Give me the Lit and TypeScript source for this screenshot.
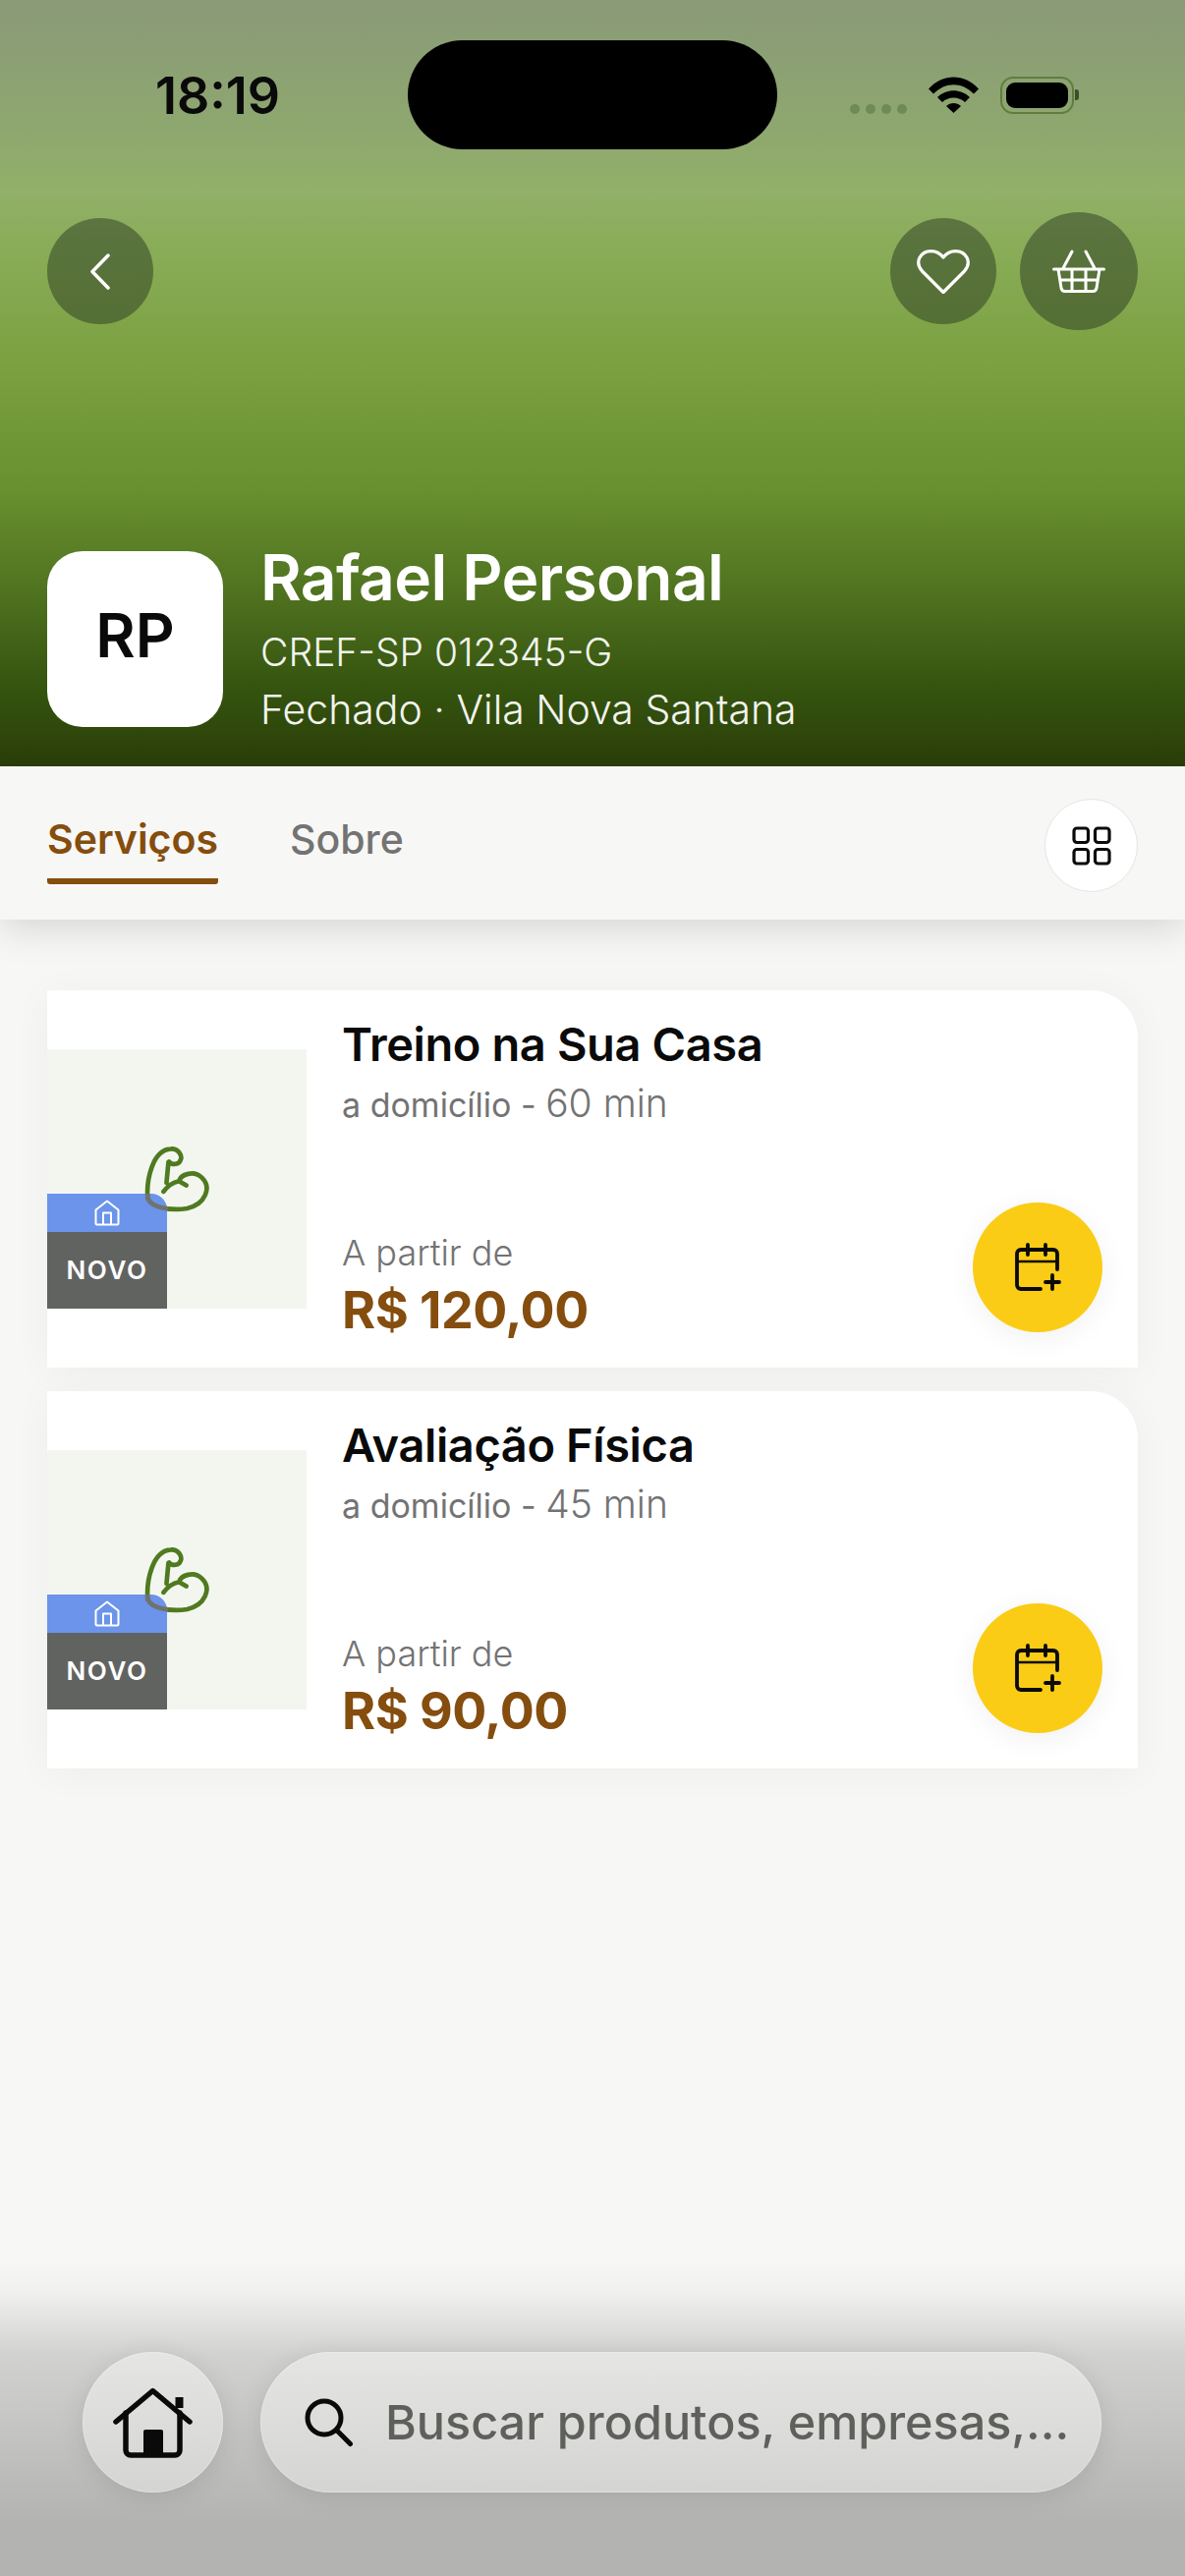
import { LitElement, html, css, svg } from 'lit';
import { customElement } from 'lit/decorators.js';

const services = [
  { title: 'Treino na Sua Casa', duration: '60 min', price: 'R$ 120,00' },
  { title: 'Avaliação Física', duration: '45 min', price: 'R$ 90,00' },
];

const armIcon = svg`<path d="M10 160C5 100 25 10 80 7c25-2 35 23 30 33-5 15-25 18-35 6M73 47l-6 63M58 137c12-17 32-29 47-32l22 13M105 105c5-20 45-35 70-10 30 30 10 80-45 93-30 5-65 2-90-6-20-7-32-17-30-37"/>`;

@customElement('app-root')
export class AppRoot extends LitElement {
  static styles = css`
    :host {
      display: block;
      position: relative;
      width: 1206px;
      height: 2622px;
      overflow: hidden;
      background: #f7f7f5;
      font-family: 'Inter', 'Liberation Sans', sans-serif;
    }

    svg {
      display: block;
    }

    .hero {
      height: 780px;
      box-sizing: border-box;
      padding: 41px 48px 0;
      display: flex;
      flex-direction: column;
      background: linear-gradient(180deg, #8a9a78 0, #8ea76f 130px, #92b068 195px, #8aad5a 245px, #7ba140 370px, #68902f 500px, #507320 600px, #35540f 700px, #2b3e08 780px);
    }

    .status {
      display: flex;
      align-items: center;
      height: 111px;
    }

    .time {
      width: 367px;
      box-sizing: border-box;
      padding: 0 0 0 110px;
      margin-top: 2px;
      font-size: 52px;
      font-weight: 600;
      color: #0a0a0a;
    }

    .island {
      width: 376px;
      height: 111px;
      border-radius: 56px;
      background: #000;
    }

    .status-right {
      display: flex;
      align-items: center;
      margin-left: 74px;
    }

    .dots {
      display: flex;
      gap: 6px;
      margin: 28px 22px 0 0;
    }

    .dots i {
      width: 10px;
      height: 10px;
      border-radius: 50%;
      background: #6f8a58;
    }

    .battery {
      width: 75px;
      height: 38px;
      box-sizing: border-box;
      margin-left: 22px;
      padding: 4px;
      border: 2px solid #5f7e3e;
      border-radius: 13px;
    }

    .battery i {
      display: block;
      height: 100%;
      border-radius: 9px;
      background: #000;
    }

    .nub {
      width: 4px;
      height: 11px;
      margin-left: 1px;
      border-radius: 0 3px 3px 0;
      background: #3d4d2e;
    }

    .actions {
      display: flex;
      align-items: center;
      gap: 24px;
      margin-top: 64px;
      height: 120px;
    }

    .round {
      flex: none;
      width: 108px;
      height: 108px;
      border-radius: 50%;
      display: flex;
      align-items: center;
      justify-content: center;
      background: rgba(42, 58, 34, 0.5);
    }

    .round.big {
      width: 120px;
      height: 120px;
    }

    .spacer {
      flex: 1;
    }

    .seller {
      display: flex;
      gap: 38px;
      margin-top: 225px;
    }

    .logo {
      width: 179px;
      height: 179px;
      border-radius: 36px;
      background: #fff;
      display: flex;
      align-items: center;
      justify-content: center;
      padding-bottom: 8px;
      box-sizing: border-box;
      font-size: 62px;
      font-weight: 600;
      color: #0a0a0a;
    }

    .seller-info {
      color: #fff;
      margin-top: -9px;
    }

    .seller-name {
      font-size: 64px;
      font-weight: 600;
      line-height: 72px;
      letter-spacing: -0.6px;
    }

    .seller-line {
      font-size: 39px;
      font-weight: 300;
      line-height: 59px;
      color: #f2f4ee;
    }

    .seller-line.first {
      margin-top: 10px;
    }

    .seller-line.place {
      font-size: 41px;
    }

    .tabs {
      position: relative;
      height: 156px;
      box-sizing: border-box;
      padding: 33px 48px 0;
      display: flex;
      background: #f7f7f5;
      box-shadow: 0 10px 36px rgba(0, 0, 0, 0.13);
    }

    .tab {
      margin-right: 73px;
      font-size: 41px;
      font-weight: 500;
      line-height: 82px;
      height: 81px;
      color: #737373;
    }

    .tab.active {
      font-weight: 600;
      color: #854d0e;
      border-bottom: 6px solid #854d0e;
      border-radius: 0 0 3px 3px;
    }

    .grid-btn {
      width: 95px;
      height: 95px;
      box-sizing: border-box;
      border: 1px solid #e5e5e5;
      border-radius: 50%;
      background: #fff;
      display: flex;
      align-items: center;
      justify-content: center;
    }

    .list {
      display: flex;
      flex-direction: column;
      gap: 24px;
      padding: 72px 48px 0;
    }

    .card {
      position: relative;
      height: 384px;
      box-sizing: border-box;
      padding: 60px 0 0;
      display: flex;
      gap: 36px;
      background: #fff;
      border-radius: 0 48px 0 0;
      box-shadow: 0 4px 40px rgba(0, 0, 0, 0.045);
    }

    .thumb {
      position: relative;
      flex: none;
      width: 264px;
      height: 264px;
      background: #f3f6ef;
    }

    .arm {
      position: absolute;
      left: 99px;
      top: 99px;
      fill: none;
      stroke: #4f7a1f;
      stroke-width: 14;
      stroke-linecap: round;
      stroke-linejoin: round;
    }

    /* the part of the arm that shows through the blue badge */
    .arm.over {
      stroke: #6f7370;
      clip-path: inset(48px 43px 0 0 round 0 16px 0 0);
    }

    .badges {
      position: absolute;
      left: 0;
      bottom: 0;
      width: 122px;
    }

    .badge-blue {
      height: 39px;
      border-radius: 0 16px 0 0;
      background: #6b94ea;
      display: flex;
      align-items: center;
      justify-content: center;
    }

    .badge-new {
      height: 78px;
      box-sizing: border-box;
      padding-bottom: 2px;
      background: #616361;
      display: flex;
      align-items: center;
      justify-content: center;
      font-size: 26px;
      font-weight: 600;
      letter-spacing: 1.6px;
      color: #fff;
    }

    .info {
      margin-top: -60px;
      padding-top: 32px;
    }

    .title {
      font-size: 47px;
      font-weight: 600;
      line-height: 46px;
      letter-spacing: -0.4px;
      color: #0a0a0a;
    }

    .sub {
      margin-top: 14px;
      font-size: 34px;
      font-weight: 400;
      line-height: 46px;
      color: #737373;
    }

    .sub span {
      font-size: 39px;
      font-weight: 300;
    }

    .from {
      margin-top: 107px;
      font-size: 36px;
      font-weight: 300;
      line-height: 40px;
      color: #737373;
    }

    .price {
      margin-top: 8px;
      font-size: 52px;
      font-weight: 700;
      line-height: 62px;
      letter-spacing: -0.5px;
      color: #854d0e;
    }

    .book {
      position: absolute;
      right: 36px;
      bottom: 36px;
      width: 132px;
      height: 132px;
      border-radius: 50%;
      background: #facc15;
      display: flex;
      align-items: center;
      justify-content: center;
      box-shadow: 0 6px 30px rgba(0, 0, 0, 0.06);
    }

    .dock {
      position: absolute;
      left: 0;
      right: 0;
      bottom: 0;
      height: 322px;
      box-sizing: border-box;
      padding: 94px 85px 0 84px;
      display: flex;
      gap: 38px;
      align-items: flex-start;
      background: linear-gradient(180deg, rgba(179, 179, 178, 0) 0, rgba(179, 179, 178, 0.1) 33px, rgba(179, 179, 178, 0.34) 67px, rgba(179, 179, 178, 0.57) 100px, rgba(179, 179, 178, 0.73) 167px, #b3b3b2 267px);
    }

    .dock-home,
    .search {
      height: 143px;
      border-radius: 72px;
      background: linear-gradient(180deg, #e5e5e4, #d4d5d3);
      box-shadow: 0 4px 26px rgba(0, 0, 0, 0.1), inset 0 0 0 1px rgba(255, 255, 255, 0.25);
      display: flex;
      align-items: center;
    }

    .dock-home {
      flex: none;
      width: 143px;
      justify-content: center;
    }

    .search {
      flex: 1;
      min-width: 0;
      padding-left: 45px;
      gap: 32px;
      box-sizing: border-box;
    }

    .search-text {
      font-size: 48.500px;
      font-weight: 500;
      color: #5e605c;
      white-space: nowrap;
    }
  `;

  private renderCard(item: (typeof services)[number]) {
    return html`
      <div class="card">
        <div class="thumb">
          <svg class="arm" width="67" height="67" viewBox="0 0 200 200">${armIcon}</svg>
          <div class="badges">
            <div class="badge-blue">
              <svg width="26" height="27" viewBox="0 0 26 27" fill="none" stroke="#fff" stroke-width="2" stroke-linejoin="round">
                <path d="M1.500 10.500 13 1.500l11.500 9V24a1.500 1.500 0 0 1-1.500 1.500H3A1.500 1.500 0 0 1 1.500 24z"/>
                <path d="M9 25.500V13.500h8v12"/>
              </svg>
            </div>
            <div class="badge-new">NOVO</div>
          </div>
          <svg class="arm over" width="67" height="67" viewBox="0 0 200 200">${armIcon}</svg>
        </div>
        <div class="info">
          <div class="title">${item.title}</div>
          <div class="sub">a domicílio - <span>${item.duration}</span></div>
          <div class="from">A partir de</div>
          <div class="price">${item.price}</div>
        </div>
        <div class="book">
          <svg width="48" height="50" viewBox="0 0 48 50" fill="none" stroke="#0a0a0a" stroke-width="3.800" stroke-linecap="round" stroke-linejoin="round">
            <path d="M27 47H7a4 4 0 0 1-4-4V11a4 4 0 0 1 4-4h33a4 4 0 0 1 4 4v16"/>
            <path d="M3 19h41" stroke-width="2.400"/>
            <path d="M14 2v10M32 2v10M39 33v14M32 40h14"/>
          </svg>
        </div>
      </div>
    `;
  }

  render() {
    return html`
      <section class="hero">
        <div class="status">
          <div class="time">18:19</div>
          <div class="island"></div>
          <div class="status-right">
            <div class="dots"><i></i><i></i><i></i><i></i></div>
            <svg width="51" height="37" viewBox="0 0 51 37">
              <path d="M0 12.500C14-3.500 37-3.500 51 12.500l-5 5C34 5 17 5 5 17.500z"/>
              <path d="M9 21c9-9 24-9 33 0l-5 5c-6-6-17-6-23 0z"/>
              <path d="M18 30c4-4 11-4 15 0l-7.500 7z"/>
            </svg>
            <div class="battery"><i></i></div>
            <div class="nub"></div>
          </div>
        </div>

        <div class="actions">
          <div class="round">
            <svg width="22" height="37" viewBox="0 0 22 37" fill="none" stroke="#fff" stroke-width="3.500" stroke-linecap="round" stroke-linejoin="round">
              <path d="M19 2 3 18.500 19 35"/>
            </svg>
          </div>
          <div class="spacer"></div>
          <div class="round">
            <svg width="54" height="45" viewBox="0 0 54 45" fill="none" stroke="#fff" stroke-width="3.200" stroke-linejoin="round">
              <path d="M27 43.500 5.500 22C-3 12 4.500 1.600 14.500 1.600c5.500 0 9.500 2.400 12.500 6.400 3-4 7-6.400 12.500-6.400C49.500 1.600 57 12 48.500 22z"/>
            </svg>
          </div>
          <div class="round big">
            <svg width="54" height="44" viewBox="0 0 54 44" fill="none" stroke="#fff" stroke-width="3" stroke-linecap="round" stroke-linejoin="round">
              <path d="M1.500 20h51M6 20l3 19a4 4 0 0 0 4 3.500h28a4 4 0 0 0 4-3.500l3-19M20 20v22M34 20v22M8 31h38M11 19l9-17M43 19 34 2"/>
            </svg>
          </div>
        </div>

        <div class="seller">
          <div class="logo">RP</div>
          <div class="seller-info">
            <div class="seller-name">Rafael Personal</div>
            <div class="seller-line first">CREF-SP 012345-G</div>
            <div class="seller-line place">Fechado · Vila Nova Santana</div>
          </div>
        </div>
      </section>

      <nav class="tabs">
        <div class="tab active">Serviços</div>
        <div class="tab">Sobre</div>
        <div class="spacer"></div>
        <div class="grid-btn">
          <svg width="40" height="40" viewBox="0 0 40 40" fill="none" stroke="#0a0a0a" stroke-width="3.200">
            <rect x="2" y="2" width="14.500" height="14.500" rx="3"/>
            <rect x="23.500" y="2" width="14.500" height="14.500" rx="3"/>
            <rect x="2" y="23.500" width="14.500" height="14.500" rx="3"/>
            <rect x="23.500" y="23.500" width="14.500" height="14.500" rx="3"/>
          </svg>
        </div>
      </nav>

      <div class="list">${services.map((item) => this.renderCard(item))}</div>

      <div class="dock">
        <div class="dock-home">
          <svg width="82" height="72" viewBox="0 0 82 72" fill="none" stroke="#0a0a0a" stroke-width="5.500" stroke-linecap="round" stroke-linejoin="round">
            <path d="M3 35 40.500 3.500 78 35"/>
            <path d="M67.500 21V10" stroke-width="8" stroke-linecap="butt"/>
            <path d="M13 26v38a5 5 0 0 0 5 5h45a5 5 0 0 0 5-5V26"/>
            <rect x="31" y="43" width="20" height="27" rx="2" fill="#0a0a0a" stroke="none"/>
          </svg>
        </div>
        <div class="search">
          <svg width="50" height="50" viewBox="0 0 50 50" fill="none" stroke="#0a0a0a" stroke-width="5" stroke-linecap="round">
            <circle cx="20" cy="20" r="17"/>
            <path d="m33 33 13.500 13.500"/>
          </svg>
          <span class="search-text">Buscar produtos, empresas,...</span>
        </div>
      </div>
    `;
  }
}
